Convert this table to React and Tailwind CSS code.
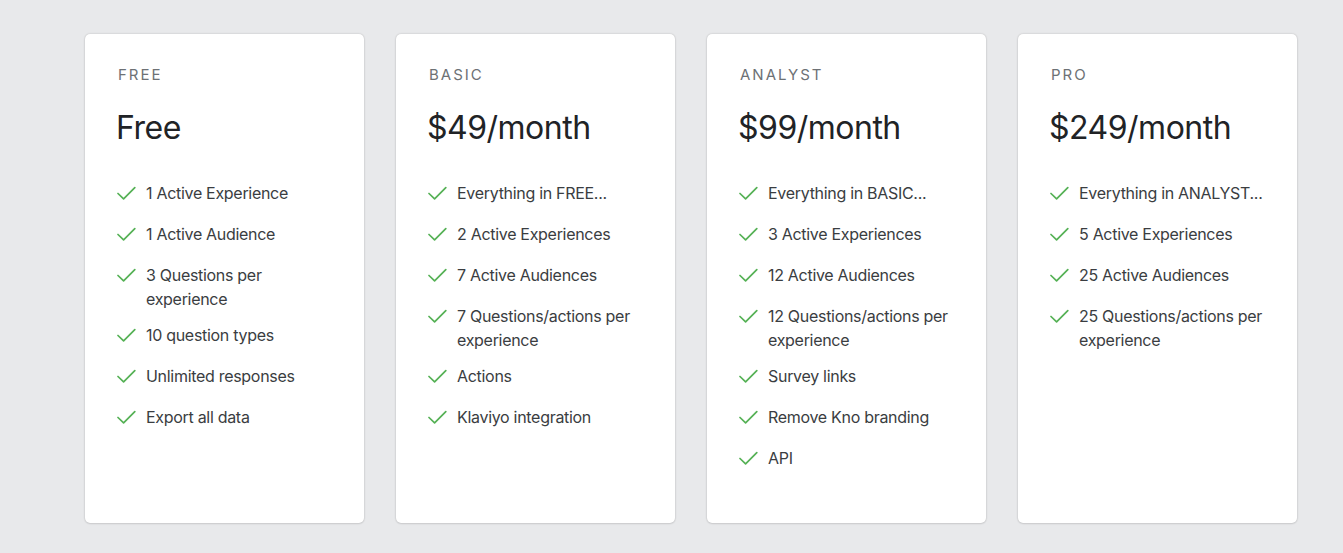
import React from 'react';

const plans = [
    {
        id: 'free',
        name: 'FREE',
        price: 'Free',
        features: ['1 Active Experience', '1 Active Audience', '3 Questions per experience', '10 question types', 'Unlimited responses', 'Export all data']
    },
    {
        id: 'basic',
        name: 'BASIC',
        price: '$49/month',
        features: ['Everything in FREE...', '2 Active Experiences', '7 Active Audiences', '7 Questions/actions per experience', 'Actions', 'Klaviyo integration']
    },
    {
        id: 'analyst',
        name: 'ANALYST',
        price: '$99/month',
        features: ['Everything in BASIC...', '3 Active Experiences', '12 Active Audiences', '12 Questions/actions per experience', 'Survey links', 'Remove Kno branding', 'API']
    },
    {
        id: 'pro',
        name: 'PRO',
        price: '$249/month',
        features: ['Everything in ANALYST...', '5 Active Experiences', '25 Active Audiences', '25 Questions/actions per experience']
    }
];

const Check = () => (
    <svg width="19" height="24" viewBox="0 0 19 24" className="shrink-0" fill="none">
        <path d="M1 12.5 L6.6 17.9 L17.8 6.6" stroke="#55b155" strokeWidth="1.7" strokeLinecap="round" strokeLinejoin="round" />
    </svg>
);

const PlanCard = ({ plan }) => (
    <div className="w-[279px] h-[489px] bg-white rounded-[5px] shadow-[0_0_2px_rgba(0,0,0,0.22),0_1px_2px_rgba(0,0,0,0.08)] pl-[32px] pr-[20px] pt-[31px]">
        <div className="ml-[1px] text-[15px] leading-5 tracking-[2px] text-[#6d7175]">{plan.name}</div>
        <div className="mt-[23px] -ml-[1px] text-[32px] leading-[40px] tracking-[-0.5px] text-[#212326]">{plan.price}</div>
        <ul className="mt-[33px] flex flex-col gap-[12px]">
            {plan.features.map((f) => (
                <li key={f} className="flex gap-[10px] min-h-[29px] text-[16px] leading-6 tracking-[-0.3px] text-[#3a3d41]">
                    <Check />
                    <span className="w-[140px] grow">{f}</span>
                </li>
            ))}
        </ul>
    </div>
);

export default function App() {
    return (
        <div className="min-h-[553px] bg-[#e8e9eb] pl-[85px] pt-[34px] font-['Inter',sans-serif]">
            <div className="flex gap-[32px]">
                {plans.map((p) => (
                    <PlanCard key={p.id} plan={p} />
                ))}
            </div>
        </div>
    );
}
